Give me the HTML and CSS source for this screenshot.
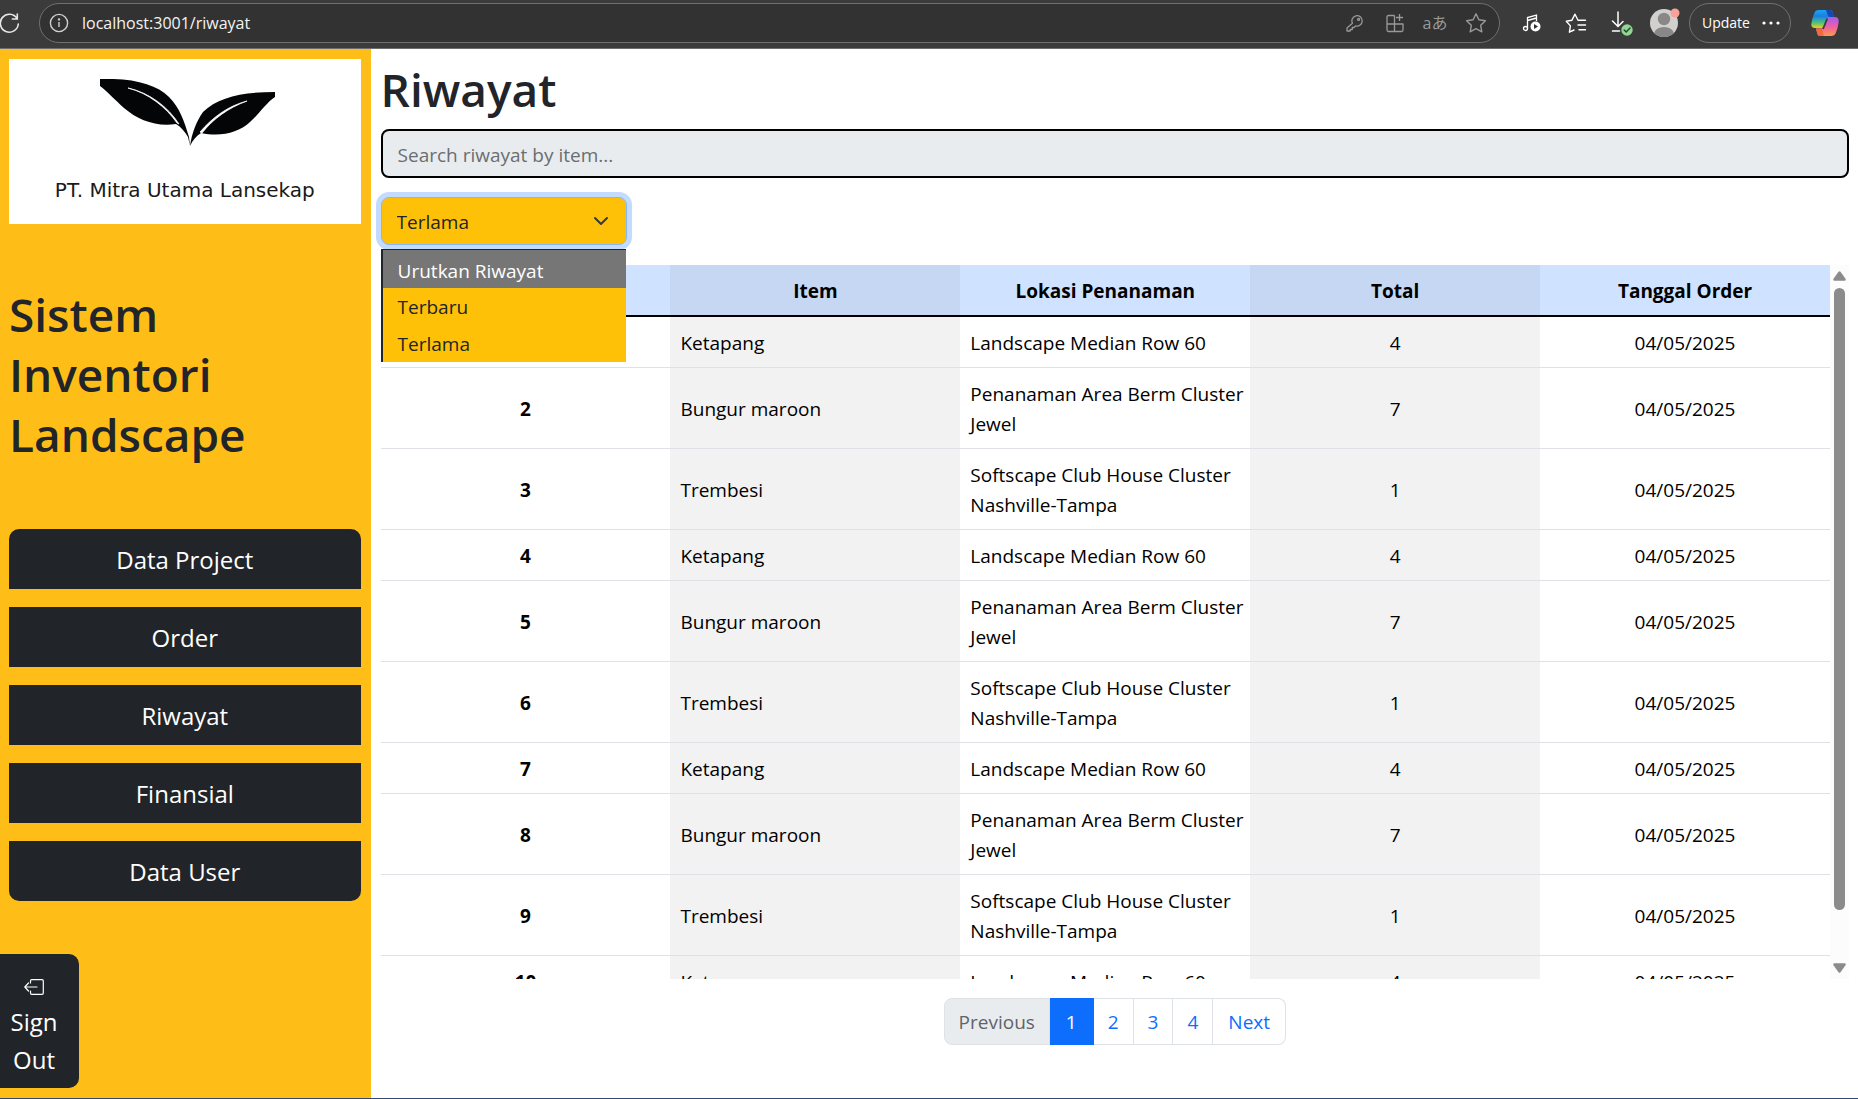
FILE: index.html
```html
<!DOCTYPE html>
<html lang="id">
<head>
<meta charset="utf-8">
<title>Riwayat</title>
<meta name="viewport" content="width=device-width, initial-scale=1">
<link rel="stylesheet" href="styles.css">
</head>
<body>
<header class="browser">
  <button class="tool reload" aria-label="Reload">
    <svg width="20" height="22" viewBox="0 0 20 22" fill="none" stroke="#e6e6e6" stroke-width="1.6" stroke-linecap="round"><path d="M17 6.5A9 9 0 1 0 18.3 12M17.3 2v5h-5"/></svg>
  </button>
  <div class="address">
    <svg width="20" height="20" viewBox="0 0 20 20" fill="none" stroke="#cfcfcf" stroke-width="1.4"><circle cx="10" cy="10" r="8.6"/><path d="M10 9v5"/><circle cx="10" cy="6.4" r=".5"/></svg>
    <input class="url" type="text" aria-label="Address" value="localhost:3001/riwayat">
    <div class="address-tools">
      <button class="tool" aria-label="Passwords"><svg width="20" height="20" viewBox="0 0 20 20" fill="none" stroke="#999" stroke-width="1.3" stroke-linejoin="round"><path d="M7.4 10.3a5.2 5.2 0 1 1 3.2 2.6L9 14.500H7.300v2H5.200V18H2v-3z"/><circle cx="13.600" cy="6.400" r="1"/></svg></button>
      <button class="tool" aria-label="Apps"><svg width="20" height="20" viewBox="0 0 20 20" fill="none" stroke="#999" stroke-width="1.3" stroke-linejoin="round"><path d="M9.500 2.500H3.500q-1.500 0-1.500 1.500v13q0 1.500 1.500 1.500h13q1.500 0 1.500-1.500v-6H2M9.500 2.500v16M14.500 1v7M11 4.500h7"/></svg></button>
      <button class="tool translate" aria-label="Translate">aあ</button>
      <button class="tool" aria-label="Favorite"><svg width="22" height="22" viewBox="0 0 22 22" fill="none" stroke="#999" stroke-width="1.400" stroke-linejoin="round"><path d="M11 1.800l2.900 6 6.500.9-4.700 4.600 1.100 6.500-5.800-3.100-5.800 3.100 1.100-6.500-4.700-4.600 6.500-.9z"/></svg></button>
    </div>
  </div>
  <div class="browser-tools">
    <button class="tool" aria-label="Media"><svg width="20" height="20" viewBox="0 0 20 20" fill="none" stroke="#fff" stroke-width="1.300"><circle cx="3.500" cy="15.500" r="2"/><path d="M5.500 15.500V4.500L14.500 2v6M5.500 7.500l9-2.500"/><circle cx="13.500" cy="13.500" r="5" fill="#fff" stroke="none"/><path d="M12 11v5l4-2.500z" fill="#333" stroke="none"/></svg></button>
    <button class="tool" aria-label="Favorites"><svg width="22" height="22" viewBox="0 0 22 22" fill="none" stroke="#fff" stroke-width="1.400" stroke-linejoin="round" stroke-linecap="round"><path d="M9 18l-4.600 2.200 1-6.300L1.300 9.200l5.500-.9L10 2.200l3 6h7.500M13 13h7.500M14 17.800h6.500"/></svg></button>
    <button class="tool" aria-label="Downloads"><svg width="24" height="26" viewBox="0 0 24 26" fill="none" stroke="#fff" stroke-width="1.500" stroke-linecap="round"><path d="M8 2v14M2.500 11L8 16.500l5-5M2.500 21h7"/><circle cx="17" cy="20" r="5.700" fill="#92d694" stroke="none"/><path d="M14.200 20l2 2 3.800-4" stroke="#27452b"/></svg></button>
    <button class="tool profile" aria-label="Profile"><svg width="30" height="30" viewBox="0 0 30 30"><defs><clipPath id="face"><circle cx="14" cy="15" r="14"/></clipPath></defs><circle cx="14" cy="15" r="14" fill="#d2d0ce"/><g fill="#8a8886" clip-path="url(#face)"><circle cx="14" cy="11" r="6.200"/><ellipse cx="14" cy="26" rx="10" ry="7"/></g><circle cx="25" cy="5" r="4.500" fill="#f7a19a"/></svg></button>
    <button class="update">Update <svg width="18" height="4" viewBox="0 0 18 4" fill="#fff"><circle cx="2" cy="2" r="1.600"/><circle cx="9" cy="2" r="1.600"/><circle cx="16" cy="2" r="1.600"/></svg></button>
    <button class="tool" aria-label="Copilot"><svg width="28" height="28" viewBox="0 0 28 28">
      <defs>
        <linearGradient id="cool" x1="0" y1="0" x2="0" y2="1"><stop offset="0" stop-color="#18a4f2"/><stop offset=".35" stop-color="#1b7fe0"/><stop offset=".7" stop-color="#4cc27a"/><stop offset="1" stop-color="#f4cf16"/></linearGradient>
        <linearGradient id="warm" x1="0" y1="0" x2="0" y2="1"><stop offset="0" stop-color="#a15cf3"/><stop offset=".5" stop-color="#ee5fa4"/><stop offset="1" stop-color="#ff9a4a"/></linearGradient>
      </defs>
      <path d="M8 1h11q2 0 2.600 2L23 8h-3q-3 0-3.900 3l-2.400 5.500q-.8 2.500-3 2.500H4Q0 19 .3 15 1 10 3.300 4 4.300 1 8 1z" fill="url(#cool)"/>
      <path d="M15 1h4q2 0 2.600 2L23 8h-3.500q-2.500 0-3-2.500z" fill="#1748b5"/>
      <path d="M20 27H9q-2 0-2.600-2L5 19.500h4q2.800 0 3.700-3l2.400-6q.8-2.500 3-2.500H24q4 0 3.700 5-.7 6-3 11-1 3-4.700 3z" fill="url(#warm)"/>
      <path d="M12.500 27H9q-2 0-2.600-2L5 19.500h4.500q2 0 2.500 3z" fill="#ef6a3c"/>
      <path d="M16.300 9.500L12 20" stroke="#3b3b3b" stroke-width="1.800"/>
    </svg></button>
  </div>
</header>

<div class="app">
  <aside class="sidebar">
    <figure class="logo">
      <svg width="182" height="68" viewBox="-6 0 182 68" aria-hidden="true">
        <path d="M0 0C33-1 56 5 69 18 80 29 84 42 89 58L90 67C92 54 96 43 103 33 118 18 143 13 175 13V18C166 24 160 34 150 43 138 54 121 58 101 54 96 57 93 61 90 67L88 58C85 53 81 48 76 45 56 48 38 41 24 29 14 20 8 13 0 7z" fill="#030506"/>
        <path d="M28 9C48 14 66 28 77 44L79 45C68 28 50 14 28 9zM147 22C128 27 113 38 100 53L102 54C113 40 128 29 147 22z" fill="#fff" stroke="#fff" stroke-width=".8"/>
      </svg>
      <figcaption>PT. Mitra Utama Lansekap</figcaption>
    </figure>
    <h1 class="brand">Sistem Inventori Landscape</h1>
    <nav class="menu">
      <a href="#project">Data Project</a>
      <a href="#order">Order</a>
      <a href="#riwayat">Riwayat</a>
      <a href="#finansial">Finansial</a>
      <a href="#user">Data User</a>
    </nav>
    <button class="signout">
      <svg width="20" height="16" viewBox="0 0 20 16" fill="none" stroke="#fff" stroke-width="1.200" stroke-linecap="round" stroke-linejoin="round"><path d="M6.500 4V2q0-1.300 1.300-1.300H18q1.300 0 1.300 1.300v12q0 1.300-1.300 1.300H7.800q-1.300 0-1.300-1.300v-2M13 8H.8M4.500 4L.8 8l3.700 4"/></svg>
      <span>Sign Out</span>
    </button>
  </aside>

  <main class="content">
    <h1 class="title">Riwayat</h1>
    <input class="search" type="search" aria-label="Search riwayat" placeholder="Search riwayat by item...">
    <div class="sort">
      <select class="sort-select" aria-label="Urutkan Riwayat">
        <option>Urutkan Riwayat</option>
        <option>Terbaru</option>
        <option selected>Terlama</option>
      </select>
      <svg class="caret" width="16" height="16" viewBox="0 0 16 16" fill="none" stroke="#343a40" stroke-width="2" stroke-linecap="round" stroke-linejoin="round"><path d="M2 5l6 6 6-6"/></svg>
      <ul class="options" role="listbox" aria-label="Urutkan Riwayat">
        <li class="active" role="option">Urutkan Riwayat</li>
        <li role="option">Terbaru</li>
        <li role="option">Terlama</li>
      </ul>
    </div>

    <div class="table-area">
      <div class="table-view">
        <table class="history">
          <thead>
            <tr><th aria-label="No"></th><th>Item</th><th>Lokasi Penanaman</th><th>Total</th><th>Tanggal Order</th></tr>
          </thead>
          <tbody>
            <tr><th>1</th><td>Ketapang</td><td>Landscape Median Row 60</td><td>4</td><td>04/05/2025</td></tr>
            <tr><th>2</th><td>Bungur maroon</td><td>Penanaman Area Berm Cluster Jewel</td><td>7</td><td>04/05/2025</td></tr>
            <tr><th>3</th><td>Trembesi</td><td>Softscape Club House Cluster Nashville-Tampa</td><td>1</td><td>04/05/2025</td></tr>
            <tr><th>4</th><td>Ketapang</td><td>Landscape Median Row 60</td><td>4</td><td>04/05/2025</td></tr>
            <tr><th>5</th><td>Bungur maroon</td><td>Penanaman Area Berm Cluster Jewel</td><td>7</td><td>04/05/2025</td></tr>
            <tr><th>6</th><td>Trembesi</td><td>Softscape Club House Cluster Nashville-Tampa</td><td>1</td><td>04/05/2025</td></tr>
            <tr><th>7</th><td>Ketapang</td><td>Landscape Median Row 60</td><td>4</td><td>04/05/2025</td></tr>
            <tr><th>8</th><td>Bungur maroon</td><td>Penanaman Area Berm Cluster Jewel</td><td>7</td><td>04/05/2025</td></tr>
            <tr><th>9</th><td>Trembesi</td><td>Softscape Club House Cluster Nashville-Tampa</td><td>1</td><td>04/05/2025</td></tr>
            <tr><th>10</th><td>Ketapang</td><td>Landscape Median Row 60</td><td>4</td><td>04/05/2025</td></tr>
          </tbody>
        </table>
      </div>
      <div class="scrollbar" aria-hidden="true">
        <svg width="13" height="10" viewBox="0 0 13 10" fill="#8b8b8b"><path d="M5.500.8q1-1 2 0l5 7q.8 2-1 2h-10q-1.800 0-1-2z"/></svg>
        <div class="track"><div class="thumb"></div></div>
        <svg width="13" height="10" viewBox="0 0 13 10" fill="#8b8b8b"><path d="M5.500 9.200q1 1 2 0l5-7q.8-2-1-2h-10q-1.800 0-1 2z"/></svg>
      </div>
    </div>

    <nav class="pagination" aria-label="Halaman">
      <a class="disabled" href="#prev">Previous</a>
      <a class="current" href="#1">1</a>
      <a href="#2">2</a>
      <a href="#3">3</a>
      <a href="#4">4</a>
      <a href="#next">Next</a>
    </nav>
  </main>
</div>
</body>
</html>
```

FILE: styles.css
```css
* { box-sizing: border-box; }

body {
  display: flex;
  flex-direction: column;
  min-height: 100vh;
  margin: 0;
  border-bottom: 1px solid #2f4b73;
  background: #fff;
  color: #212529;
  font: 19px/30px "Open Sans", "Noto Sans", "Noto Sans CJK JP", sans-serif;
}

button, input, select { font: inherit; }
svg { display: block; flex: none; }

/* Browser toolbar */
.browser {
  display: flex;
  align-items: center;
  height: 49px;
  padding: 0 19px 2px 0;
  border-bottom: 1px solid #6e6e6e;
  background: #3b3b3b;
  color: #fff;
}
.tool { padding: 0; border: 0; background: none; color: #999; }
.reload { margin-right: 19px; }
.address {
  display: flex;
  flex: 1;
  align-items: center;
  gap: 13px;
  height: 40px;
  padding: 0 12px 0 9px;
  border: 1px solid #707070;
  border-radius: 20px;
  background: #323232;
}
.url {
  flex: 1;
  min-width: 0;
  padding: 0;
  border: 0;
  background: none;
  color: #f2f2f2;
  font-size: 16px;
  line-height: 24px;
}
.address-tools { display: flex; align-items: center; gap: 20px; }
.translate { display: flex; justify-content: center; width: 20px; font-size: 16px; line-height: 20px; white-space: nowrap; }
.browser-tools { display: flex; align-items: center; gap: 23px; margin-left: 22px; }
.profile { margin-left: -7px; }
.update {
  display: flex;
  align-items: center;
  justify-content: space-between;
  width: 102px;
  height: 40px;
  margin: 0 -3px 0 -14px;
  padding: 0 10px 0 12px;
  border: 1px solid #707070;
  border-radius: 20px;
  background: none;
  color: #fff;
  font-size: 14px;
}

/* Page frame */
.app { display: flex; flex: 1; }

.sidebar {
  display: flex;
  flex-direction: column;
  align-items: flex-start;
  flex: none;
  width: calc(20% - 1px);
  padding: 10px 10px 10px 9px;
  background: #ffbd18;
}
.logo {
  display: flex;
  flex-direction: column;
  align-items: center;
  gap: 31px;
  width: 100%;
  height: 165px;
  margin: 0 0 60px;
  padding-top: 20px;
  background: #fff;
  color: #1a1a1a;
  font: 20px/24px "DejaVu Sans", sans-serif;
}
.brand, .title {
  margin: 0;
  font-size: 46px;
  font-weight: 600;
  line-height: 60px;
}
.brand { width: 280px; margin-bottom: 65px; }
.menu { display: flex; flex-direction: column; gap: 18px; width: 100%; }
.menu a {
  padding: 13px 12px 11px;
  background: #212529;
  color: #fff;
  font-size: 24px;
  line-height: 36px;
  text-align: center;
  text-decoration: none;
}
.menu a:first-child { border-radius: 10px 10px 0 0; }
.menu a:last-child { border-radius: 0 0 10px 10px; }
.signout {
  display: flex;
  flex-direction: column;
  align-items: center;
  gap: 8px;
  width: 79px;
  margin: auto 0 0 -9px;
  padding: 25px 11px 9px 0;
  border: 0;
  border-radius: 0 10px 10px 0;
  background: #212529;
  color: #fff;
  font-size: 24px;
  line-height: 38px;
}
.signout span { width: 56px; }

.content { flex: 1; min-width: 0; padding: 10px 9px 10px 10px; }
.title { margin-bottom: 10px; }
.search {
  display: block;
  width: 100%;
  height: 49px;
  padding: 2px 15px 0;
  border: 2px solid #000;
  border-radius: 8px;
  background: #e9ecef;
  color: #212529;
}
.search::placeholder { color: #6a6e72; opacity: 1; }

/* Sort control with its open list */
.sort { position: relative; width: 246px; margin: 19px 0 20px; }
.sort-select {
  display: block;
  width: 100%;
  height: 48px;
  padding: 2px 15px 0;
  appearance: none;
  border: 1px solid #86b7fe;
  border-radius: 8px;
  outline: 0;
  background: #ffc107;
  box-shadow: 0 0 0 5px #c2dbff;
  color: #212529;
}
.caret { position: absolute; top: 16px; right: 18px; pointer-events: none; }
.options {
  position: absolute;
  z-index: 1;
  top: 52px;
  left: 0;
  width: 245px;
  margin: 0;
  padding: 0;
  border: solid #212529;
  border-width: 1px 0 0 2px;
  background: #ffc107;
  list-style: none;
}
.options li { height: 37px; padding: 0 15px; line-height: 39px; }
.options .active { height: 38px; background: #767676; color: #fff; line-height: 42px; }

/* Table */
.table-area { display: flex; height: 65vh; margin-bottom: 19px; }
.table-view { flex: 1; overflow: hidden; }
.history {
  width: 100%;
  table-layout: fixed;
  border-collapse: separate;
  border-spacing: 0;
  color: #000;
}
.history th, .history td {
  padding: 11px 10px 9px;
  border-bottom: 1px solid #dee2e6;
  text-align: center;
}
.history th { font-weight: 700; }
.history td:nth-child(2), .history td:nth-child(3) { padding-right: 0; text-align: left; }
.history td:nth-child(even) { background: #f2f2f2; }
.history thead th { border-bottom: 2px solid #000; background: #cfe2ff; }
.history thead th:nth-child(even) { background: #c5d7f2; }
.scrollbar {
  display: flex;
  flex-direction: column;
  align-items: center;
  gap: 7px;
  width: 19px;
  padding: 6px 0;
  background: #fcfcfc;
}
.track { flex: 1; }
.thumb { width: 11px; height: 93%; border-radius: 6px; background: #8b8b8b; }

/* Pagination */
.pagination { display: flex; justify-content: center; }
.pagination a {
  padding: 8px 14px 7px;
  border: 1px solid #dee2e6;
  border-left-width: 0;
  color: #0d6efd;
  text-decoration: none;
}
.pagination a:first-child { border-left-width: 1px; border-radius: 8px 0 0 8px; }
.pagination a:last-child { padding-inline: 15px; border-radius: 0 8px 8px 0; }
.pagination .disabled { background: #e9ecef; color: #5f6468; }
.pagination .current { padding-inline: 16px; border-color: #0d6efd; background: #0d6efd; color: #fff; }
```
